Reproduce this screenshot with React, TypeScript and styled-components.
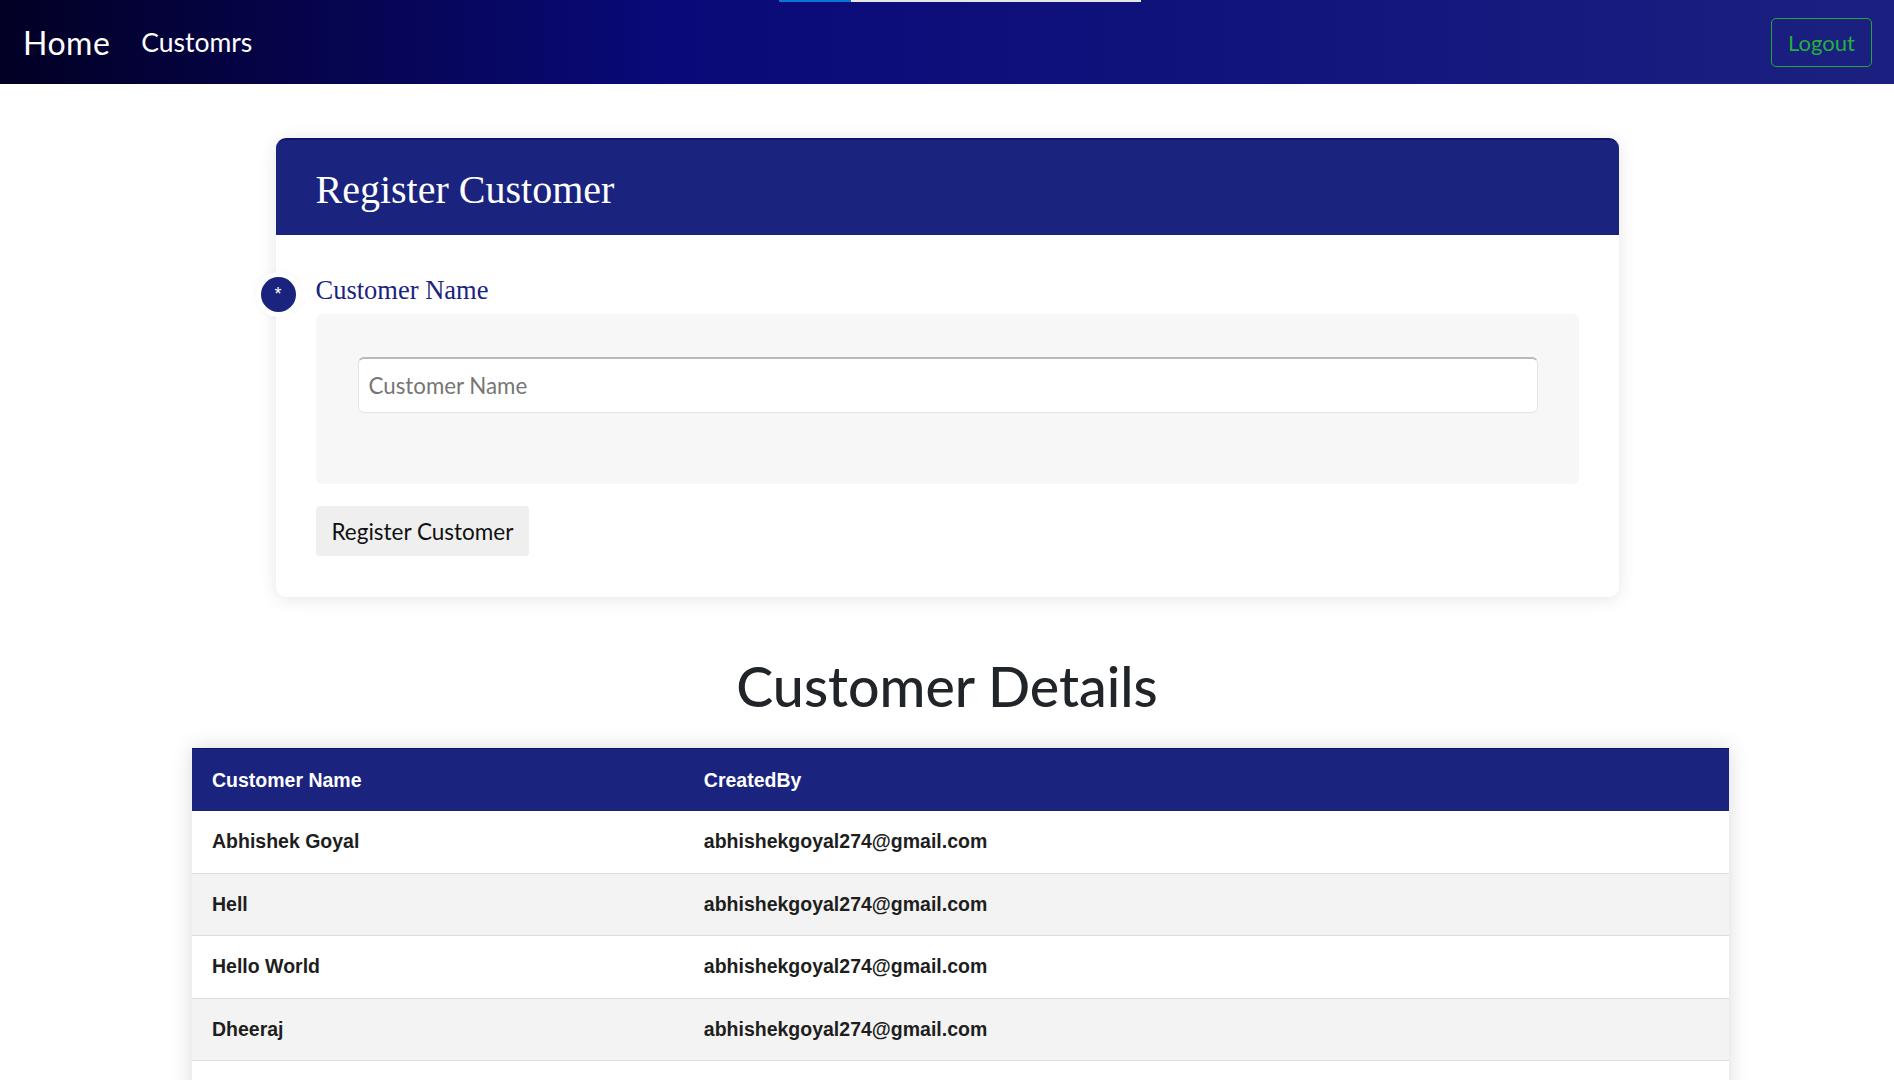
import styled, { createGlobalStyle } from "styled-components";

const GlobalStyle = createGlobalStyle`
  body {
    margin: 0;
    background: #ffffff;
    font-family: Lato, "Open Sans", sans-serif;
  }
`;

const Nav = styled.nav`
    position: relative;
    height: 84px;
    display: flex;
    align-items: center;
    padding: 0 22px 0 23px;
    background: linear-gradient(90deg, rgb(2, 0, 36) 0%, rgb(9, 9, 121) 35%, rgb(27, 32, 128) 100%);
`;

const Loader = styled.div`
    position: absolute;
    top: 0;
    left: 779px;
    width: 362px;
    height: 2px;
    background: #e6e6e6;
`;

const LoaderFill = styled.div`
    height: 100%;
    background: #0b74d6;
`;

interface NavLinkProps {
    $big?: boolean;
}
const NavLink = styled.a<NavLinkProps>`
    color: #ffffff;
    text-decoration: none;
    font-size: ${props => props.$big ? "32px" : "26.5px"};
    margin-right: ${props => props.$big ? "31px" : "0"};
    letter-spacing: ${props => props.$big ? "0.5px" : "0"};
    cursor: pointer;
`;

const LogoutButton = styled.button`
    margin-left: auto;
    width: 101px;
    height: 49px;
    background: none;
    border: 1px solid #22a83a;
    border-radius: 5px;
    color: #22b13c;
    font-family: Lato, "Open Sans", sans-serif;
    font-size: 22px;
    cursor: pointer;
`;

const Main = styled.main`
    padding: 54px 0 40px;
`;

const Card = styled.section`
    position: relative;
    width: 1343px;
    margin: 0 auto;
    background: #ffffff;
    border-radius: 10px;
    box-shadow: 0 2px 18px rgba(0, 0, 0, 0.1);
`;

const CardHeader = styled.div`
    height: 97px;
    box-sizing: border-box;
    display: flex;
    align-items: center;
    padding: 0 40px;
    background: #1a237e;
    border-top: 2px solid #0e146c;
    border-radius: 10px 10px 0 0;
`;

const CardTitle = styled.h2`
    margin: 4px 0 0;
    font-family: "Liberation Serif", "Times New Roman", serif;
    font-weight: 400;
    font-size: 40px;
    color: #ffffff;
`;

const CardBody = styled.div`
    padding: 40px 40px 41px;
`;

const Field = styled.div`
    position: relative;
`;

const Badge = styled.span`
    position: absolute;
    left: -55px;
    top: 2px;
    width: 35px;
    height: 35px;
    border-radius: 50%;
    background: #1a237e;
    color: #ffffff;
    display: flex;
    align-items: center;
    justify-content: center;
    font-family: "Liberation Sans", Arial, sans-serif;
    font-size: 18px;
    box-shadow: 0 0 0 5px #ffffff, 0 0 8px 5px rgba(0, 0, 0, 0.04);
`;

const Label = styled.label`
    display: block;
    margin-bottom: 8px;
    font-family: "Liberation Serif", "Times New Roman", serif;
    font-size: 26.5px;
    color: #1a237e;
`;

const InputPanel = styled.div`
    background: #f7f7f7;
    border-radius: 6px;
    padding: 43px 41px 71px 42px;
`;

const TextInput = styled.input`
    display: block;
    width: 100%;
    height: 56px;
    box-sizing: border-box;
    padding: 0 10px;
    border: 1px solid #e4e4e4;
    border-top: 2px solid #b9b9b9;
    border-radius: 6px;
    background: #ffffff;
    font-family: Lato, "Open Sans", sans-serif;
    font-size: 22.3px;
    color: #333;
    &::placeholder {
        color: #767676;
    }
`;

const SubmitButton = styled.button`
    margin-top: 22px;
    height: 50px;
    padding: 0 16px;
    background: #efefef;
    border: none;
    border-radius: 4px;
    font-family: Lato, "Open Sans", sans-serif;
    font-size: 22.5px;
    color: #111;
    cursor: pointer;
`;

const SectionTitle = styled.h1`
    margin: 55px 0 29px;
    text-align: center;
    font-family: Lato, "Open Sans", sans-serif;
    font-weight: 500;
    font-size: 55.5px;
    color: #212529;
`;

const Table = styled.table`
    width: 1537px;
    margin-left: 192px;
    border-collapse: collapse;
    box-shadow: 0 0 20px rgba(0, 0, 0, 0.15);
    font-family: "Liberation Sans", Arial, sans-serif;
    font-weight: 700;
    font-size: 19.5px;
`;

const HeadCell = styled.th`
    height: 62px;
    padding: 0 20px;
    text-align: left;
    background: #1a237e;
    border-top: 1px solid #0c116a;
    color: #ffffff;
`;

interface RowProps {
    $alt?: boolean;
}
const Row = styled.tr<RowProps>`
    background: ${props => props.$alt ? "#f3f3f3" : "#ffffff"};
    border-bottom: 1px solid #dddddd;
`;

const Cell = styled.td`
    height: 61.5px;
    padding: 0 20px;
    color: #1e1e1e;
`;

const customers = [
    { name: "Abhishek Goyal", createdBy: "abhishekgoyal274@gmail.com" },
    { name: "Hell", createdBy: "abhishekgoyal274@gmail.com" },
    { name: "Hello World", createdBy: "abhishekgoyal274@gmail.com" },
    { name: "Dheeraj", createdBy: "abhishekgoyal274@gmail.com" },
    { name: "Rahul", createdBy: "abhishekgoyal274@gmail.com" },
];

export default function App() {
    return (
        <>
            <GlobalStyle />
            <Nav>
                <Loader>
                    <LoaderFill style={{ width: "20%" }} />
                </Loader>
                <NavLink $big>Home</NavLink>
                <NavLink>Customrs</NavLink>
                <LogoutButton>Logout</LogoutButton>
            </Nav>
            <Main>
                <Card>
                    <CardHeader>
                        <CardTitle>Register Customer</CardTitle>
                    </CardHeader>
                    <CardBody>
                        <Field>
                            <Badge>*</Badge>
                            <Label>Customer Name</Label>
                            <InputPanel>
                                <TextInput placeholder="Customer Name" />
                            </InputPanel>
                        </Field>
                        <SubmitButton>Register Customer</SubmitButton>
                    </CardBody>
                </Card>

                <SectionTitle>Customer Details</SectionTitle>

                <Table>
                    <thead>
                        <tr>
                            <HeadCell style={{ width: "32%" }}>Customer Name</HeadCell>
                            <HeadCell>CreatedBy</HeadCell>
                        </tr>
                    </thead>
                    <tbody>
                        {customers.map((c, i) => (
                            <Row key={i} $alt={i % 2 === 1}>
                                <Cell>{c.name}</Cell>
                                <Cell>{c.createdBy}</Cell>
                            </Row>
                        ))}
                    </tbody>
                </Table>
            </Main>
        </>
    );
}
